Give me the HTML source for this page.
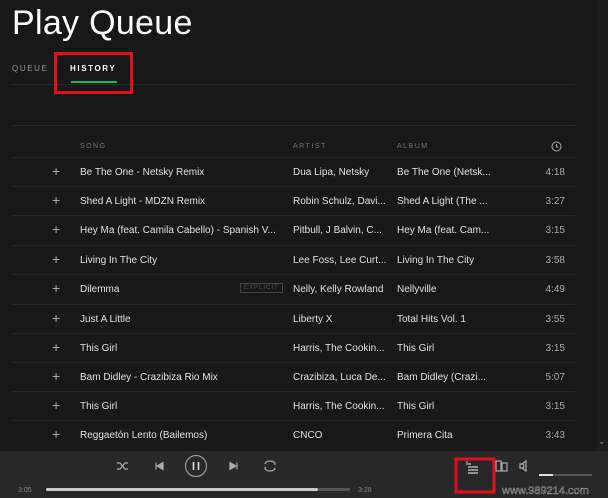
<!DOCTYPE html>
<html><head><meta charset="utf-8"><style>
*{margin:0;padding:0;box-sizing:border-box}
body{width:608px;height:498px;background:#181818;font-family:"Liberation Sans",sans-serif;color:#ddd;position:relative;overflow:hidden}
.a{position:absolute;white-space:nowrap}
h1{position:absolute;left:12px;top:4px;font-size:34px;font-weight:normal;color:#fff;letter-spacing:0.3px}
.tab{font-size:8px;letter-spacing:1.6px;top:64px}
.hdr{font-size:7px;letter-spacing:1.5px;color:#777;top:143px}
.row{position:absolute;left:12px;width:563px;height:29px;border-top:1px solid #262626;font-size:10px;color:#e0e0e0}
.row span{position:absolute;top:9px;white-space:nowrap}
.p{left:40px;font-size:14px;color:#aaa;top:5px!important}
.s{left:68px}.ar{left:281px}.al{left:385px}.t{right:10px;color:#aaa}
.bar{position:absolute;left:0;top:451px;width:608px;height:47px;background:#282828}
</style></head><body>
<h1>Play Queue</h1>
<div class="a tab" style="left:12px;color:#999">QUEUE</div>
<div class="a tab" style="left:70px;color:#fff;font-weight:bold">HISTORY</div>
<div class="a" style="left:71px;top:81px;width:46px;height:2px;background:#1db954"></div>
<div class="a" style="left:12px;top:84px;width:563px;height:1px;background:#2a2a2a"></div>
<div class="a" style="left:54px;top:52px;width:79px;height:42px;border:3px solid #e0101a"></div>
<div class="a" style="left:12px;top:125px;width:563px;height:1px;background:#2a2a2a"></div>
<div class="a hdr" style="left:80px">SONG</div>
<div class="a hdr" style="left:293px">ARTIST</div>
<div class="a hdr" style="left:397px">ALBUM</div>
<svg class="a" style="left:551px;top:141px" width="11" height="11" viewBox="0 0 11 11"><circle cx="5.5" cy="5.5" r="4.5" fill="none" stroke="#aaa"/><path d="M5.5 3v3h2" fill="none" stroke="#aaa"/></svg>
<div class="a" style="left:597px;top:0;width:11px;height:451px;background:#1c1c1c"></div>
<div class="a" style="left:598px;top:436px;font-size:9px;color:#888">⌄</div>
<div class="row" style="top:157px"><span class="p">+</span><span class="s">Be The One - Netsky Remix</span><span class="ar">Dua Lipa, Netsky</span><span class="al">Be The One (Netsk...</span><span class="t">4:18</span></div>
<div class="row" style="top:186px"><span class="p">+</span><span class="s">Shed A Light - MDZN Remix</span><span class="ar">Robin Schulz, Davi...</span><span class="al">Shed A Light (The ...</span><span class="t">3:27</span></div>
<div class="row" style="top:215px"><span class="p">+</span><span class="s">Hey Ma (feat. Camila Cabello) - Spanish V...</span><span class="ar">Pitbull, J Balvin, C...</span><span class="al">Hey Ma (feat. Cam...</span><span class="t">3:15</span></div>
<div class="row" style="top:245px"><span class="p">+</span><span class="s">Living In The City</span><span class="ar">Lee Foss, Lee Curt...</span><span class="al">Living In The City</span><span class="t">3:58</span></div>
<div class="row" style="top:274px"><span class="p">+</span><span class="s">Dilemma</span><span style="left:228px;top:8px;font-size:6px;letter-spacing:1px;color:#555;border:1px solid #444;padding:1px 3px">EXPLICIT</span><span class="ar">Nelly, Kelly Rowland</span><span class="al">Nellyville</span><span class="t">4:49</span></div>
<div class="row" style="top:304px"><span class="p">+</span><span class="s">Just A Little</span><span class="ar">Liberty X</span><span class="al">Total Hits Vol. 1</span><span class="t">3:55</span></div>
<div class="row" style="top:333px"><span class="p">+</span><span class="s">This Girl</span><span class="ar">Harris, The Cookin...</span><span class="al">This Girl</span><span class="t">3:15</span></div>
<div class="row" style="top:362px"><span class="p">+</span><span class="s">Bam Didley - Crazibiza Rio Mix</span><span class="ar">Crazibiza, Luca De...</span><span class="al">Bam Didley (Crazi...</span><span class="t">5:07</span></div>
<div class="row" style="top:391px"><span class="p">+</span><span class="s">This Girl</span><span class="ar">Harris, The Cookin...</span><span class="al">This Girl</span><span class="t">3:15</span></div>
<div class="row" style="top:420px"><span class="p">+</span><span class="s">Reggaetón Lento (Bailemos)</span><span class="ar">CNCO</span><span class="al">Primera Cita</span><span class="t">3:43</span></div>
<div class="bar"></div>
<svg class="a" style="left:0;top:451px" width="608" height="47" viewBox="0 0 608 47">
<g stroke="#aaa" fill="none" stroke-width="1.2">
<path d="M117 12l3 0 5 6 3 0M117 18l3 0 5-6 3 0"/>
<path d="M156 11.5v7"/><path d="M163 11.5l-6 3.5 6 3.5z" fill="#aaa"/>
<circle cx="196" cy="15" r="10.5" stroke="#999"/>
<path d="M193.5 11v8M198.5 11v8" stroke="#ddd" stroke-width="1.6"/>
<path d="M237 11.5v7"/><path d="M230 11.5l6 3.5-6 3.5z" fill="#aaa"/>
<path d="M265 13a5 3 0 0 1 10 0v1M275 17a5 3 0 0 1-10 0v-1"/>
<path d="M522 13a2 2 0 0 1 0 4h-2v-4z M522 13l4-3v10l-4-3"/>
<rect x="496" y="10" width="5" height="10"/><rect x="502" y="12" width="5" height="8"/>
</g>
<path d="M468 13h3M468 16h10M468 19h10M468 22h10" stroke="#ccc" stroke-width="1.2"/>
<path d="M467 10v4" stroke="#ccc"/>
<rect x="456" y="8" width="38" height="33" fill="none" stroke="#e0101a" stroke-width="3"/>
<rect x="539" y="23" width="53" height="2" fill="#555"/><rect x="539" y="23" width="14" height="2" fill="#ddd"/>
<rect x="46" y="37" width="304" height="3" rx="1.5" fill="#555"/><rect x="46" y="37" width="272" height="3" rx="1.5" fill="#ccc"/>
<text x="18" y="41" font-size="7" fill="#888" font-family="Liberation Sans">3:05</text>
<text x="358" y="41" font-size="7" fill="#888" font-family="Liberation Sans">3:28</text>
<text x="502" y="43" font-size="11" fill="#222" stroke="#ddd" stroke-width="0.3" font-family="Liberation Sans">www.989214.com</text>
</svg>
</body></html>
